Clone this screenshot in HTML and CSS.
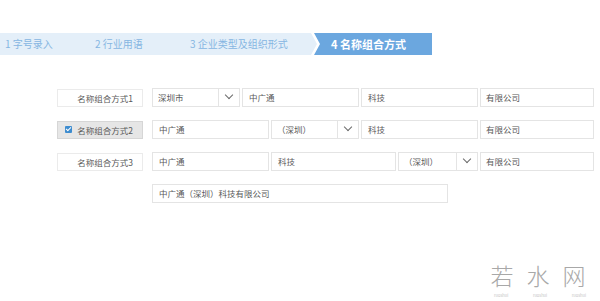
FILE: index.html
```html
<!DOCTYPE html>
<html lang="zh-CN">
<head>
    <meta charset="UTF-8">
    <meta name="viewport" content="width=device-width, initial-scale=1.0">
    <title>名称组合方式</title>
    <link rel="stylesheet" href="styles.css">
</head>
<body>
    <div class="steps">
        <div class="step step-1">1 字号录入</div>
        <div class="step step-2">2 行业用语</div>
        <div class="step step-3">3 企业类型及组织形式</div>
        <div class="step step-4 active">4 名称组合方式</div>
    </div>

    <div class="combos">
        <div class="row">
            <label class="option"><span class="check"></span>名称组合方式1</label>
            <div class="fields">
                <div class="select s-short"><span class="value">深圳市</span><span class="arrow"></span></div>
                <div class="field f-mid">中广通</div>
                <div class="field f-mid">科技</div>
                <div class="field f-end">有限公司</div>
            </div>
        </div>
        <div class="row">
            <label class="option selected"><span class="check checked"></span>名称组合方式2</label>
            <div class="fields">
                <div class="field f-mid">中广通</div>
                <div class="select s-short"><span class="value">（深圳）</span><span class="arrow"></span></div>
                <div class="field f-mid">科技</div>
                <div class="field f-end">有限公司</div>
            </div>
        </div>
        <div class="row">
            <label class="option"><span class="check"></span>名称组合方式3</label>
            <div class="fields">
                <div class="field f-mid">中广通</div>
                <div class="field f-wide">科技</div>
                <div class="select s-narrow"><span class="value">（深圳）</span><span class="arrow"></span></div>
                <div class="field f-end">有限公司</div>
            </div>
        </div>
        <div class="row result-row">
            <div class="field result">中广通（深圳）科技有限公司</div>
        </div>
    </div>

    <div class="watermark">
        <div class="wm-title">若 水 网</div>
        <div class="wm-sub"><span>ruoshui</span><span>ruoshui</span><span>ruoshui</span></div>
    </div>
</body>
</html>
```

FILE: styles.css
```css
body {
    margin: 0;
    font-family: "Noto Sans CJK SC", "Noto Sans", sans-serif;
    background-color: #fff;
    color: #555;
}
.steps {
    display: flex;
    margin-top: 33px;
    height: 22px;
    font-size: 10px;
    line-height: 22px;
}
.step {
    background-color: #e4eff9;
    color: #86b6e2;
    white-space: nowrap;
}
.step-1 {
    width: 85px;
    padding-left: 5px;
}
.step-2 {
    width: 90px;
    padding-left: 5px;
}
.step-3 {
    width: 127px;
    padding-left: 5px;
    clip-path: polygon(0 0, calc(100% - 6px) 0, 100% 50%, calc(100% - 6px) 100%, 0 100%);
}
.step-4 {
    width: 101px;
    margin-left: -3px;
    padding-left: 17px;
    font-size: 11px;
    font-weight: bold;
    clip-path: polygon(0 0, 100% 0, 100% 100%, 0 100%, 6px 50%);
}
.step.active {
    background-color: #6ba7df;
    color: #fff;
}
.combos {
    margin-top: 33px;
    padding-left: 57px;
    display: flex;
    flex-direction: column;
    gap: 13px;
}
.row {
    display: flex;
    align-items: center;
    height: 19px;
}
.option {
    box-sizing: border-box;
    width: 86px;
    height: 18px;
    margin-right: 9px;
    border: 1px solid #ebebeb;
    display: flex;
    align-items: center;
    justify-content: flex-end;
    padding-right: 9px;
    font-size: 8.5px;
    color: #5a5a5a;
}
.option.selected {
    background-color: #e6e6e6;
    border-color: #d6d6d6;
}
.check {
    width: 7px;
    height: 7px;
    margin-right: 5px;
}
.check.checked {
    background-color: #3d8ccf;
    border-radius: 1px;
    position: relative;
}
.check.checked::after {
    content: "";
    position: absolute;
    left: 2px;
    top: 0px;
    width: 2px;
    height: 4px;
    border: solid #fff;
    border-width: 0 1px 1px 0;
    transform: rotate(45deg);
}
.fields {
    display: flex;
    gap: 2px;
}
.field, .select {
    box-sizing: border-box;
    height: 19px;
    border: 1px solid #e4e4e4;
    font-size: 8.5px;
    line-height: 17px;
    color: #5a5a5a;
    background: #fff;
}
.field {
    padding-left: 6px;
}
.f-mid { width: 117px; }
.f-wide { width: 125px; }
.f-end { width: 114px; padding-left: 5px; }
.select {
    display: flex;
}
.select .value {
    flex: 1;
    padding-left: 5px;
    border-right: 1px solid #e4e4e4;
}
.s-short { width: 88px; }
.s-narrow { width: 80px; }
.arrow {
    width: 20px;
    position: relative;
}
.arrow::after {
    content: "";
    position: absolute;
    left: 7px;
    top: 3px;
    width: 5px;
    height: 5px;
    border: solid #6a6a6a;
    border-width: 0 1.5px 1.5px 0;
    transform: rotate(45deg);
}
.result-row {
    padding-left: 95px;
}
.result {
    width: 296px;
    padding-left: 6px;
}
.watermark {
    position: absolute;
    left: 486px;
    top: 258px;
    width: 108px;
    text-align: center;
    color: #a8a8a8;
}
.wm-title {
    font-size: 23px;
    line-height: 34px;
    letter-spacing: 4px;
    font-weight: 300;
}
.wm-sub {
    display: flex;
    justify-content: space-between;
    margin-top: 1px;
    font-size: 4px;
    line-height: 5px;
    color: #c4c4c4;
    padding: 0 8px;
}
```
